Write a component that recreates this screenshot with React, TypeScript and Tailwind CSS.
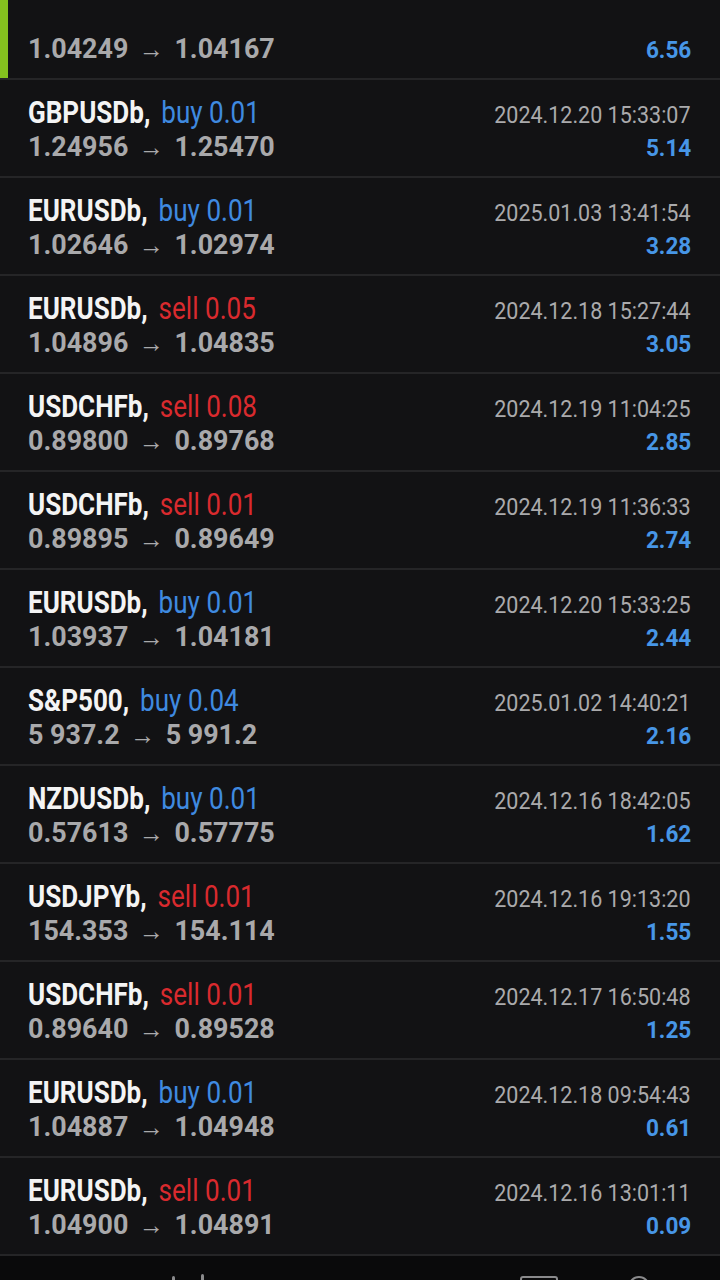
import React from "react";

type Trade = {
  symbol: string;
  side: "buy" | "sell";
  volume: string;
  open: string;
  close: string;
  time: string;
  profit: string;
  marked?: boolean;
};

const trades: Trade[] = [
  { symbol: "", side: "buy", volume: "", open: "1.04249", close: "1.04167", time: "", profit: "6.56", marked: true },
  { symbol: "GBPUSDb", side: "buy", volume: "0.01", open: "1.24956", close: "1.25470", time: "2024.12.20 15:33:07", profit: "5.14" },
  { symbol: "EURUSDb", side: "buy", volume: "0.01", open: "1.02646", close: "1.02974", time: "2025.01.03 13:41:54", profit: "3.28" },
  { symbol: "EURUSDb", side: "sell", volume: "0.05", open: "1.04896", close: "1.04835", time: "2024.12.18 15:27:44", profit: "3.05" },
  { symbol: "USDCHFb", side: "sell", volume: "0.08", open: "0.89800", close: "0.89768", time: "2024.12.19 11:04:25", profit: "2.85" },
  { symbol: "USDCHFb", side: "sell", volume: "0.01", open: "0.89895", close: "0.89649", time: "2024.12.19 11:36:33", profit: "2.74" },
  { symbol: "EURUSDb", side: "buy", volume: "0.01", open: "1.03937", close: "1.04181", time: "2024.12.20 15:33:25", profit: "2.44" },
  { symbol: "S&P500", side: "buy", volume: "0.04", open: "5 937.2", close: "5 991.2", time: "2025.01.02 14:40:21", profit: "2.16" },
  { symbol: "NZDUSDb", side: "buy", volume: "0.01", open: "0.57613", close: "0.57775", time: "2024.12.16 18:42:05", profit: "1.62" },
  { symbol: "USDJPYb", side: "sell", volume: "0.01", open: "154.353", close: "154.114", time: "2024.12.16 19:13:20", profit: "1.55" },
  { symbol: "USDCHFb", side: "sell", volume: "0.01", open: "0.89640", close: "0.89528", time: "2024.12.17 16:50:48", profit: "1.25" },
  { symbol: "EURUSDb", side: "buy", volume: "0.01", open: "1.04887", close: "1.04948", time: "2024.12.18 09:54:43", profit: "0.61" },
  { symbol: "EURUSDb", side: "sell", volume: "0.01", open: "1.04900", close: "1.04891", time: "2024.12.16 13:01:11", profit: "0.09" },
];

const TradeRow: React.FC<{ trade: Trade }> = ({ trade }) => {
  return (
    <div className="relative h-[98px] border-b-2 border-[#252527] pl-[28px] pr-[29px] pt-[16px]">
      {trade.marked && <div className="absolute left-0 top-0 h-full w-[8px] bg-[#84c11f]" />}
      <div className="flex h-[34px] items-baseline justify-between">
        {trade.symbol && (
          <>
            <span className="inline-block origin-left scale-x-[0.84] whitespace-nowrap text-[31px] leading-[34px]">
              <span className="font-bold text-[#f4f4f4]">{trade.symbol},</span>
              <span className={`ml-[13px] ${trade.side === "buy" ? "text-[#3f8ae0]" : "text-[#d92a2e]"}`}>
                {trade.side} {trade.volume}
              </span>
            </span>
            <span className="inline-block origin-right scale-x-[0.915] whitespace-nowrap text-[23.5px] text-[#aaaaac]">
              {trade.time}
            </span>
          </>
        )}
      </div>
      <div className="flex h-[32px] items-baseline justify-between">
        <span className="inline-flex origin-left scale-x-[0.96] items-baseline whitespace-nowrap text-[28px] font-bold leading-[32px] text-[#a9a9ab]">
          <span>{trade.open}</span>
          <span className="mx-[11px] text-[26px] font-normal">→</span>
          <span>{trade.close}</span>
        </span>
        <span className="inline-block origin-right scale-x-[0.94] text-[24px] font-bold text-[#4796e6]">
          {trade.profit}
        </span>
      </div>
    </div>
  );
};

export default function App() {
  return (
    <div
      className="relative flex h-[1280px] w-[720px] flex-col overflow-hidden bg-[#121214]"
      style={{ fontFamily: "Roboto, 'Liberation Sans', sans-serif" }}
    >
      <div className="mt-[-18px]">
        {trades.map((t, i) => (
          <TradeRow key={i} trade={t} />
        ))}
      </div>
      <div className="relative flex-1 bg-[#0a0a0b]">
        <div className="absolute left-[172px] top-[20px] h-[10px] w-[3px] rounded-sm bg-[#8a8a8c]" />
        <div className="absolute left-[201px] top-[18px] h-[10px] w-[3px] rounded-sm bg-[#8a8a8c]" />
        <div className="absolute left-[520px] top-[20px] h-[10px] w-[38px] rounded-t-[3px] border-2 border-[#8a8a8c]" />
        <div className="absolute left-[628px] top-[20px] h-[22px] w-[22px] rounded-full border-2 border-[#8a8a8c]" />
      </div>
    </div>
  );
}
